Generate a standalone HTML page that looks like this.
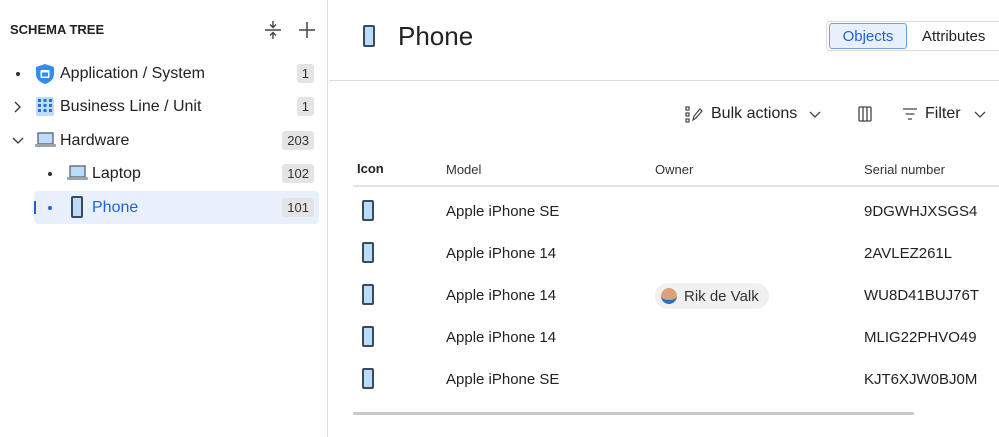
<!DOCTYPE html><html><head><style>
*{margin:0;padding:0;box-sizing:border-box}
body{width:999px;height:437px;overflow:hidden;background:#fff;font-family:"Liberation Sans",sans-serif;color:#222;position:relative}
.a{position:absolute}
.side{left:0;top:0;width:328px;height:437px;border-right:1px solid #ddd}
.row{position:absolute;left:0;width:328px;height:33px;font-size:16px;line-height:33px}
.badge{position:absolute;right:14px;top:7px;height:19px;line-height:19px;background:#e4e4e4;border-radius:3px;font-size:13px;padding:0 5px;color:#333}
.dot{position:absolute;width:4px;height:4px;border-radius:50%;background:#333;top:15px}
.td{position:absolute;font-size:15px;color:#222}
.ph{position:absolute;width:12px;height:21px;border:2px solid #3c4a55;border-radius:2px;background:#b9dcfa}
</style></head><body>
<div class="a side">
<div class="a" style="left:10px;top:22px;font-size:13px;font-weight:bold;color:#222">SCHEMA TREE</div>
<svg class="a" style="left:263px;top:20px" width="20" height="20" viewBox="0 0 20 20" fill="none" stroke="#444" stroke-width="1.4"><path d="M2 10H18M10 1V7M7 4.5L10 7.5L13 4.5M10 19V13M7 15.5L10 12.5L13 15.5"/></svg>
<svg class="a" style="left:297px;top:20px" width="20" height="20" viewBox="0 0 20 20" stroke="#444" stroke-width="1.5"><path d="M10 2V18M2 10H18"/></svg>
<div class="row" style="top:57px"><div class="dot" style="left:16px"></div>
<svg class="a" style="left:35px;top:6px" width="20" height="22" viewBox="0 0 20 22"><path d="M10 1L19 4V11C19 16 15 19.5 10 21C5 19.5 1 16 1 11V4Z" fill="#2f8ef0"/><rect x="5.5" y="7" width="9" height="8" fill="#fff" rx="1"/><rect x="7" y="9.5" width="6" height="4" fill="#2f8ef0"/></svg>
<span class="a" style="left:60px">Application / System</span><div class="badge">1</div></div>
<div class="row" style="top:90px"><svg class="a" style="left:14px;top:11px" width="8" height="12" viewBox="0 0 8 12" fill="none" stroke="#333" stroke-width="1.3"><path d="M1 1L6 6L1 11"/></svg>
<svg class="a" style="left:36px;top:7px" width="18" height="19" viewBox="0 0 18 19"><rect width="18" height="19" rx="2" fill="#bcdcfa"/><g fill="#2471d6"><rect x="2" y="2" width="3" height="3"/><rect x="7.5" y="2" width="3" height="3"/><rect x="13" y="2" width="3" height="3"/><rect x="2" y="7" width="3" height="3"/><rect x="7.5" y="7" width="3" height="3"/><rect x="13" y="7" width="3" height="3"/><rect x="2" y="12" width="3" height="3"/><rect x="7.5" y="12" width="3" height="3"/><rect x="13" y="12" width="3" height="3"/></g></svg>
<span class="a" style="left:60px">Business Line / Unit</span><div class="badge">1</div></div>
<div class="row" style="top:124px"><svg class="a" style="left:12px;top:13px" width="12" height="8" viewBox="0 0 12 8" fill="none" stroke="#333" stroke-width="1.3"><path d="M1 1L6 6L11 1"/></svg>
<svg class="a" style="left:35px;top:8px" width="21" height="16" viewBox="0 0 21 16"><rect x="3" y="1" width="15" height="11" fill="#bcdcfa" stroke="#56616b" stroke-width="1.3"/><rect x="0" y="12" width="21" height="3" rx="1" fill="#9aa4ac"/></svg>
<span class="a" style="left:60px">Hardware</span><div class="badge">203</div></div>
<div class="row" style="top:157px"><div class="dot" style="left:48px"></div>
<svg class="a" style="left:67px;top:8px" width="21" height="16" viewBox="0 0 21 16"><rect x="3" y="1" width="15" height="11" fill="#bcdcfa" stroke="#56616b" stroke-width="1.3"/><rect x="0" y="12" width="21" height="3" rx="1" fill="#9aa4ac"/></svg>
<span class="a" style="left:92px">Laptop</span><div class="badge">102</div></div>
<div class="a" style="left:34px;top:191px;width:285px;height:33px;background:#e9f0fd;border-radius:4px"></div>
<div class="a" style="left:34px;top:201px;width:2px;height:13px;background:#1d63d8"></div>
<div class="row" style="top:191px;color:#1d63d8"><div class="dot" style="left:48px;background:#1d63d8"></div>
<div class="ph" style="left:71px;top:5px;height:22px"></div>
<span class="a" style="left:92px">Phone</span><div class="badge">101</div></div>
</div>
<div class="ph" style="left:363px;top:25px;height:22px"></div>
<div class="a" style="left:398px;top:21px;font-size:26px;color:#222">Phone</div>
<div class="a" style="left:826px;top:21px;width:180px;height:30px;border:1px solid #ddd;border-radius:4px"></div>
<div class="a" style="left:829px;top:23px;width:78px;height:26px;border:1px solid #6fa0e8;background:#e9f0fd;border-radius:3px;color:#1d63d8;font-size:15px;text-align:center;line-height:26px">Objects</div>
<div class="a" style="left:922px;top:28px;font-size:15px">Attributes</div>
<div class="a" style="left:329px;top:80px;width:670px;height:1px;background:#ddd"></div>
<svg class="a" style="left:685px;top:106px" width="18" height="17" viewBox="0 0 18 17" fill="none" stroke="#444" stroke-width="1.2"><rect x="1" y="1" width="3" height="3"/><rect x="1" y="7" width="3" height="3"/><rect x="1" y="13" width="3" height="3"/><path d="M8 14L9 10L15 3L17 5L11 12Z"/></svg>
<div class="a" style="left:711px;top:105px;font-size:16px">Bulk actions</div>
<svg class="a" style="left:809px;top:111px" width="12" height="8" viewBox="0 0 12 8" fill="none" stroke="#444" stroke-width="1.3"><path d="M1 1L6 6L11 1"/></svg>
<svg class="a" style="left:858px;top:106px" width="14" height="16" viewBox="0 0 14 16" fill="none" stroke="#444" stroke-width="1.3"><rect x="1" y="1" width="12" height="14" rx="1"/><path d="M5 1V15M9 1V15"/></svg>
<svg class="a" style="left:902px;top:107px" width="16" height="14" viewBox="0 0 16 14" stroke="#444" stroke-width="1.3"><path d="M1 2H15M3.5 7H12.5M6 12H10"/></svg>
<div class="a" style="left:925px;top:105px;font-size:16px">Filter</div>
<svg class="a" style="left:974px;top:111px" width="12" height="8" viewBox="0 0 12 8" fill="none" stroke="#444" stroke-width="1.3"><path d="M1 1L6 6L11 1"/></svg>
<div class="a" style="left:357px;top:161px;font-size:13px;font-weight:bold;color:#222">Icon</div>
<div class="a" style="left:446px;top:162px;font-size:13px;color:#333">Model</div>
<div class="a" style="left:655px;top:162px;font-size:13px;color:#333">Owner</div>
<div class="a" style="left:864px;top:162px;font-size:13px;color:#333">Serial number</div>
<div class="a" style="left:353px;top:185px;width:646px;height:2px;background:#e3e3e3"></div>
<div class="ph" style="left:362px;top:200px"></div><div class="td" style="left:446px;top:203px">Apple iPhone SE</div><div class="td" style="left:864px;top:203px">9DGWHJXSGS4</div>
<div class="ph" style="left:362px;top:242px"></div><div class="td" style="left:446px;top:245px">Apple iPhone 14</div><div class="td" style="left:864px;top:245px">2AVLEZ261L</div>
<div class="ph" style="left:362px;top:284px"></div><div class="td" style="left:446px;top:287px">Apple iPhone 14</div><div class="td" style="left:864px;top:287px">WU8D41BUJ76T</div>
<div class="a" style="left:655px;top:283px;width:114px;height:26px;border-radius:13px;background:#f0f0f0"></div>
<div class="a" style="left:661px;top:288px;width:16px;height:16px;border-radius:50%;background:#d9a27a;border-bottom:4px solid #2d6fb8"></div>
<div class="td" style="left:684px;top:288px;color:#333">Rik de Valk</div>
<div class="ph" style="left:362px;top:326px"></div><div class="td" style="left:446px;top:329px">Apple iPhone 14</div><div class="td" style="left:864px;top:329px">MLIG22PHVO49</div>
<div class="ph" style="left:362px;top:368px"></div><div class="td" style="left:446px;top:371px">Apple iPhone SE</div><div class="td" style="left:864px;top:371px">KJT6XJW0BJ0M</div>
<div class="a" style="left:353px;top:412px;width:561px;height:3px;background:#c8c8c8;border-radius:2px"></div>
</body></html>
